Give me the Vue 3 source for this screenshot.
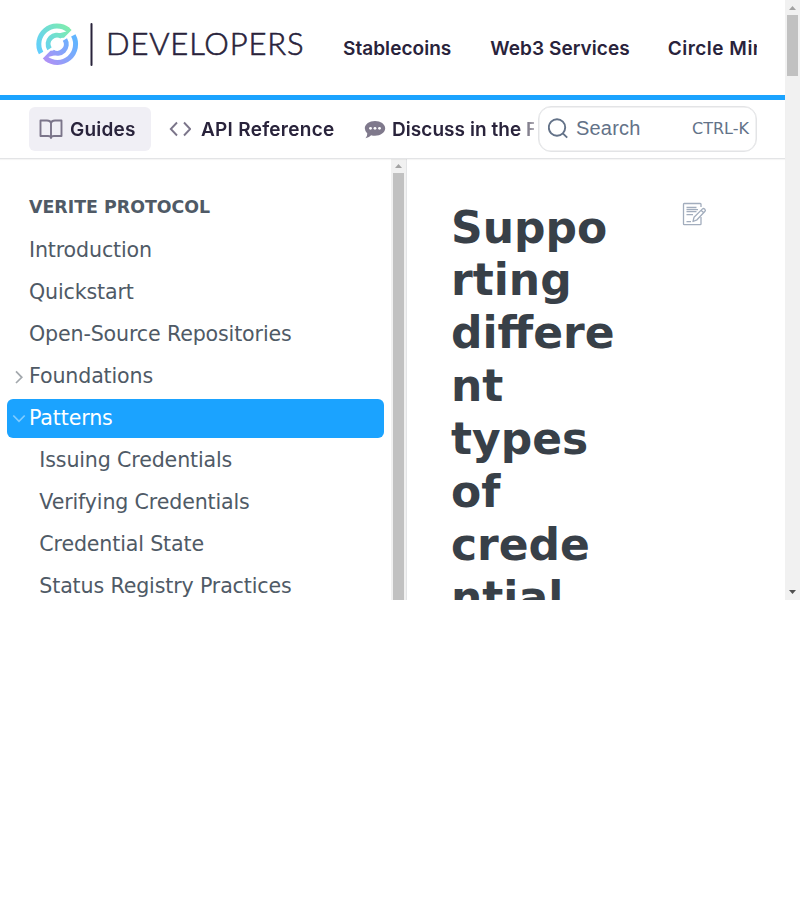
<script setup>
const products = [
  { label: 'Stablecoins', cls: 'p-stable' },
  { label: 'Web3 Services', cls: 'p-web3' },
  { label: 'Circle Mint', cls: 'p-mint' },
]
const pages = [
  { label: 'Introduction' },
  { label: 'Quickstart' },
  { label: 'Open-Source Repositories' },
  { label: 'Foundations', icon: 'right' },
  { label: 'Patterns', icon: 'down', active: true },
  { label: 'Issuing Credentials', child: true },
  { label: 'Verifying Credentials', child: true },
  { label: 'Credential State', child: true },
  { label: 'Status Registry Practices', child: true },
]
</script>

<template>
  <div class="screen">
    <div class="page">
      <header class="top">
        <svg class="logo" width="270" height="50" viewBox="0 0 270 50">
          <defs>
            <linearGradient id="g1" gradientUnits="userSpaceOnUse" x1="3" y1="32" x2="34" y2="8">
              <stop offset="0" stop-color="#61cdff" />
              <stop offset="1" stop-color="#7eecae" />
            </linearGradient>
            <linearGradient id="g2" gradientUnits="userSpaceOnUse" x1="34" y1="7" x2="6" y2="30">
              <stop offset="0" stop-color="#b090f5" />
              <stop offset="1" stop-color="#62b5ff" />
            </linearGradient>
          </defs>
          <g fill="none" stroke="url(#g1)" stroke-width="5">
            <path d="M6.100 33A18.200 18.200 0 0 1 33.300 9.900M26.900 16.500A9 9 0 0 0 14.500 28.900" />
            <path fill="url(#g1)" stroke="none" d="M33.400 7L36.600 9.900L29 17.700L25.200 18L23.500 13.500L31.200 11.500Z" />
          </g>
          <g fill="none" stroke="url(#g2)" stroke-width="5" transform="rotate(180 22.200 24.200)">
            <path d="M6.100 33A18.200 18.200 0 0 1 33.300 9.900M26.900 16.500A9 9 0 0 0 14.500 28.900" />
            <path fill="url(#g2)" stroke="none" d="M33.400 7L36.600 9.900L29 17.700L25.200 18L23.500 13.500L31.200 11.500Z" />
          </g>
          <path d="M56.500 4v41" stroke="#29233b" stroke-width="2" stroke-linecap="round" />
          <text class="wordmark" x="71" y="35.300" textLength="197.500" lengthAdjust="spacing">DEVELOPERS</text>
        </svg>
        <nav class="products">
          <a v-for="p in products" :key="p.label" :class="p.cls">{{ p.label }}</a>
        </nav>
      </header>
      <div class="subbar">
        <nav class="tabs">
          <a class="tab active">
            <svg width="24" height="22" viewBox="0 0 24 22" fill="none" stroke="#7b758a" stroke-width="1.900" stroke-linejoin="round" stroke-linecap="round">
              <path d="M12 5Q11.400 2.500 8 2.500H1.500V18H9Q12 18 12 20Q12 18 15 18H22.500V2.500H16Q12.600 2.500 12 5V20" />
            </svg>
            <span class="t-guides">Guides</span>
          </a>
          <a class="tab api">
            <svg width="22" height="16" viewBox="0 0 22 16" fill="none" stroke="#7b758a" stroke-width="1.900">
              <path d="M8 1.500L1.800 8L8 14.500M15 1.500L21.200 8L15 14.500" />
            </svg>
            <span class="t-api">API Reference</span>
          </a>
          <a class="tab discuss">
            <svg width="22" height="20" viewBox="0 0 22 20">
              <path fill="#7f798c" d="M11 2C16.500 2 21.200 5.100 21.200 9.300S16.500 16.800 11 16.800Q8.900 16.800 7.100 16.300Q4.800 19 1.500 19.300Q3.400 17 3.300 14.500Q.8 12 .8 9.300C.8 5.100 5.500 2 11 2Z" />
              <g fill="#fff"><circle cx="6.500" cy="9.300" r="1.400" /><circle cx="11" cy="9.300" r="1.400" /><circle cx="15.500" cy="9.300" r="1.400" /></g>
            </svg>
            <span class="t-discuss">Discuss in the Forum</span>
          </a>
        </nav>
        <button class="search">
          <svg width="21" height="21" viewBox="0 0 21 21" fill="none" stroke="#637288" stroke-width="1.900">
            <circle cx="9" cy="9.500" r="8.200" /><path d="M14.800 15.300L19.200 19.700" />
          </svg>
          <span class="ph">Search</span>
          <span class="key">CTRL-K</span>
        </button>
      </div>
      <div class="body">
        <aside class="sidebar">
          <h2>VERITE PROTOCOL</h2>
          <ul>
            <li v-for="p in pages" :key="p.label" :class="{ active: p.active, child: p.child }">
              <span class="chev">
                <svg v-if="p.icon === 'right'" width="14" height="14" viewBox="0 0 14 14" fill="none" stroke="#a3a8ad" stroke-width="1.700"><path d="M4 1.300L9.800 7.300L4 13" /></svg>
                <svg v-if="p.icon === 'down'" width="14" height="14" viewBox="0 0 14 14" fill="none" stroke="#81ccff" stroke-width="1.700"><path d="M1.300 3.500L7 9.300L12.700 3.500" /></svg>
              </span>
              <a>{{ p.label }}</a>
            </li>
          </ul>
        </aside>
        <div class="bar inner">
          <svg width="15" height="14" viewBox="0 1 15 14"><path fill="#a3a3a3" d="M4 10h7L7.500 6Z" /></svg>
          <i></i>
        </div>
        <main>
          <h1>Supporting different types of credential</h1>
          <svg class="edit" width="24" height="24" viewBox="0 0 24 24" fill="none" stroke="#a2adbd" stroke-width="1.300" stroke-linejoin="round">
            <path d="M19 5V2.200Q19 1.500 18.200 1.500H2.200Q1.500 1.500 1.500 2.200V22Q1.500 22.700 2.200 22.700H18.200Q19 22.700 19 22V15" />
            <path d="M4.500 5.500H14.500M4.500 7.700H16M4.500 9.700H14.500M4.500 12.700H11M4.500 19.600H9" />
            <path fill="#fff" d="M11 19.500L12 15.300L20.500 6.900Q21.500 6 22.500 6.900L23 7.700Q23.800 8.500 22.800 9.500L15 17.800ZM19 8.200L21.700 10.700" />
          </svg>
        </main>
      </div>
    </div>
    <div class="bar outer">
      <svg width="15" height="15" viewBox="0 0 15 15"><path fill="#a3a3a3" d="M4 10h7L7.500 6Z" /></svg>
      <i></i>
      <svg class="dn" width="15" height="15" viewBox="0 0 15 15"><path fill="#505050" d="M4 5h7L7.500 9Z" /></svg>
    </div>
  </div>
</template>

<style>
body { background: #fff; overflow: hidden; }
</style>
<style scoped>
* { box-sizing: border-box; }
.screen { width: 800px; height: 600px; display: flex; overflow: hidden; background: #fff; font-family: "DejaVu Sans", sans-serif; }
.page { width: 785px; display: flex; flex-direction: column; }
.top { height: 100px; flex: none; border-bottom: 5px solid #1ba3ff; display: flex; padding: 20px 28px 0 35px; }
.logo { flex: none; overflow: visible; }
.wordmark { font: 300 31px Lato, sans-serif; fill: #29233b; stroke: #29233b; stroke-width: .6px; }
.products { margin-left: 38px; flex: 1; height: 58px; display: flex; gap: 39px; overflow: hidden; align-items: center; white-space: nowrap; }
.products a, .tab span { font: 600 19px/28px Inter, sans-serif; color: #29233b; flex: none; letter-spacing: .05px; }
.products .p-mint { letter-spacing: .5px; margin-left: -1px; }
.tab span { padding-top: 2px; }
.tab .t-guides { letter-spacing: .2px; }
.tab .t-api { letter-spacing: .27px; }
.subbar { height: 59px; flex: none; border-bottom: 1px solid #e3e4e6; display: flex; padding: 6px 28px 0 29px; box-shadow: 0 1px 1px #0000000a; position: relative; z-index: 1; }
.tabs { width: 505px; margin-right: 4px; height: 46px; display: flex; align-items: center; overflow: hidden; white-space: nowrap; -webkit-mask-image: linear-gradient(90deg, #000 488px, transparent 515px); mask-image: linear-gradient(90deg, #000 488px, transparent 515px); }
.tab { display: flex; align-items: center; height: 44px; flex: none; border-radius: 6px; }
.tab.active { background: #f0eff5; width: 122px; padding-left: 10px; gap: 7px; }
.api { margin-left: 18px; gap: 10px; width: 166px; }
.discuss { margin-left: 29px; gap: 6px; }
.tab svg { flex: none; }
.search { width: 219px; flex: none; height: 46px; border: 1px solid #e3e4e6; box-shadow: inset 0 0 0 .5px #e3e4e6; border-radius: 13px; background: #fff; display: flex; align-items: center; padding: 0 7px 2px 9px; color: #637288; }
.ph { font: 20px "Liberation Sans", sans-serif; margin-left: 7px; letter-spacing: .2px; }
.key { font: 16px "DejaVu Sans", sans-serif; margin-left: auto; }
.body { flex: 1; min-height: 0; display: flex; }
.sidebar { width: 391px; flex: none; padding: 38px 7px 0; overflow: hidden; }
h2 { margin: 0 0 13px 22px; font-size: 17.400px; line-height: 21px; color: #4f5a66; }
ul { list-style: none; margin: 0; padding: 0; display: flex; flex-direction: column; gap: 3px; }
li { height: 39px; flex: none; display: flex; align-items: center; border-radius: 6px; color: #4f5a66; font-size: 20.600px; letter-spacing: -.15px; line-height: 30px; white-space: nowrap; }
li a { padding-bottom: 2px; }
li.active { background: #1ba3ff; color: #fff; }
.chev { width: 22px; padding-left: 5px; display: flex; }
.child .chev { width: 32.300px; }
.bar { width: 15px; flex: none; background: #f1f1f1; display: flex; flex-direction: column; align-items: center; }
.bar svg { flex: none; display: block; }
.bar i { width: 11px; background: #c1c1c1; flex: 1; }
.outer i { flex: none; height: 61px; }
.dn { margin-top: auto; }
.inner { box-shadow: 1px 0 0 #e3e4e6; }
main { flex: 1; display: flex; justify-content: space-between; align-items: flex-start; padding: 42.500px 79px 0 45px; }
h1 { margin: 0; width: 166px; font-size: 44px; line-height: 52.900px; color: #384048; overflow-wrap: anywhere; }
.edit { flex: none; margin-top: .5px; }
</style>
